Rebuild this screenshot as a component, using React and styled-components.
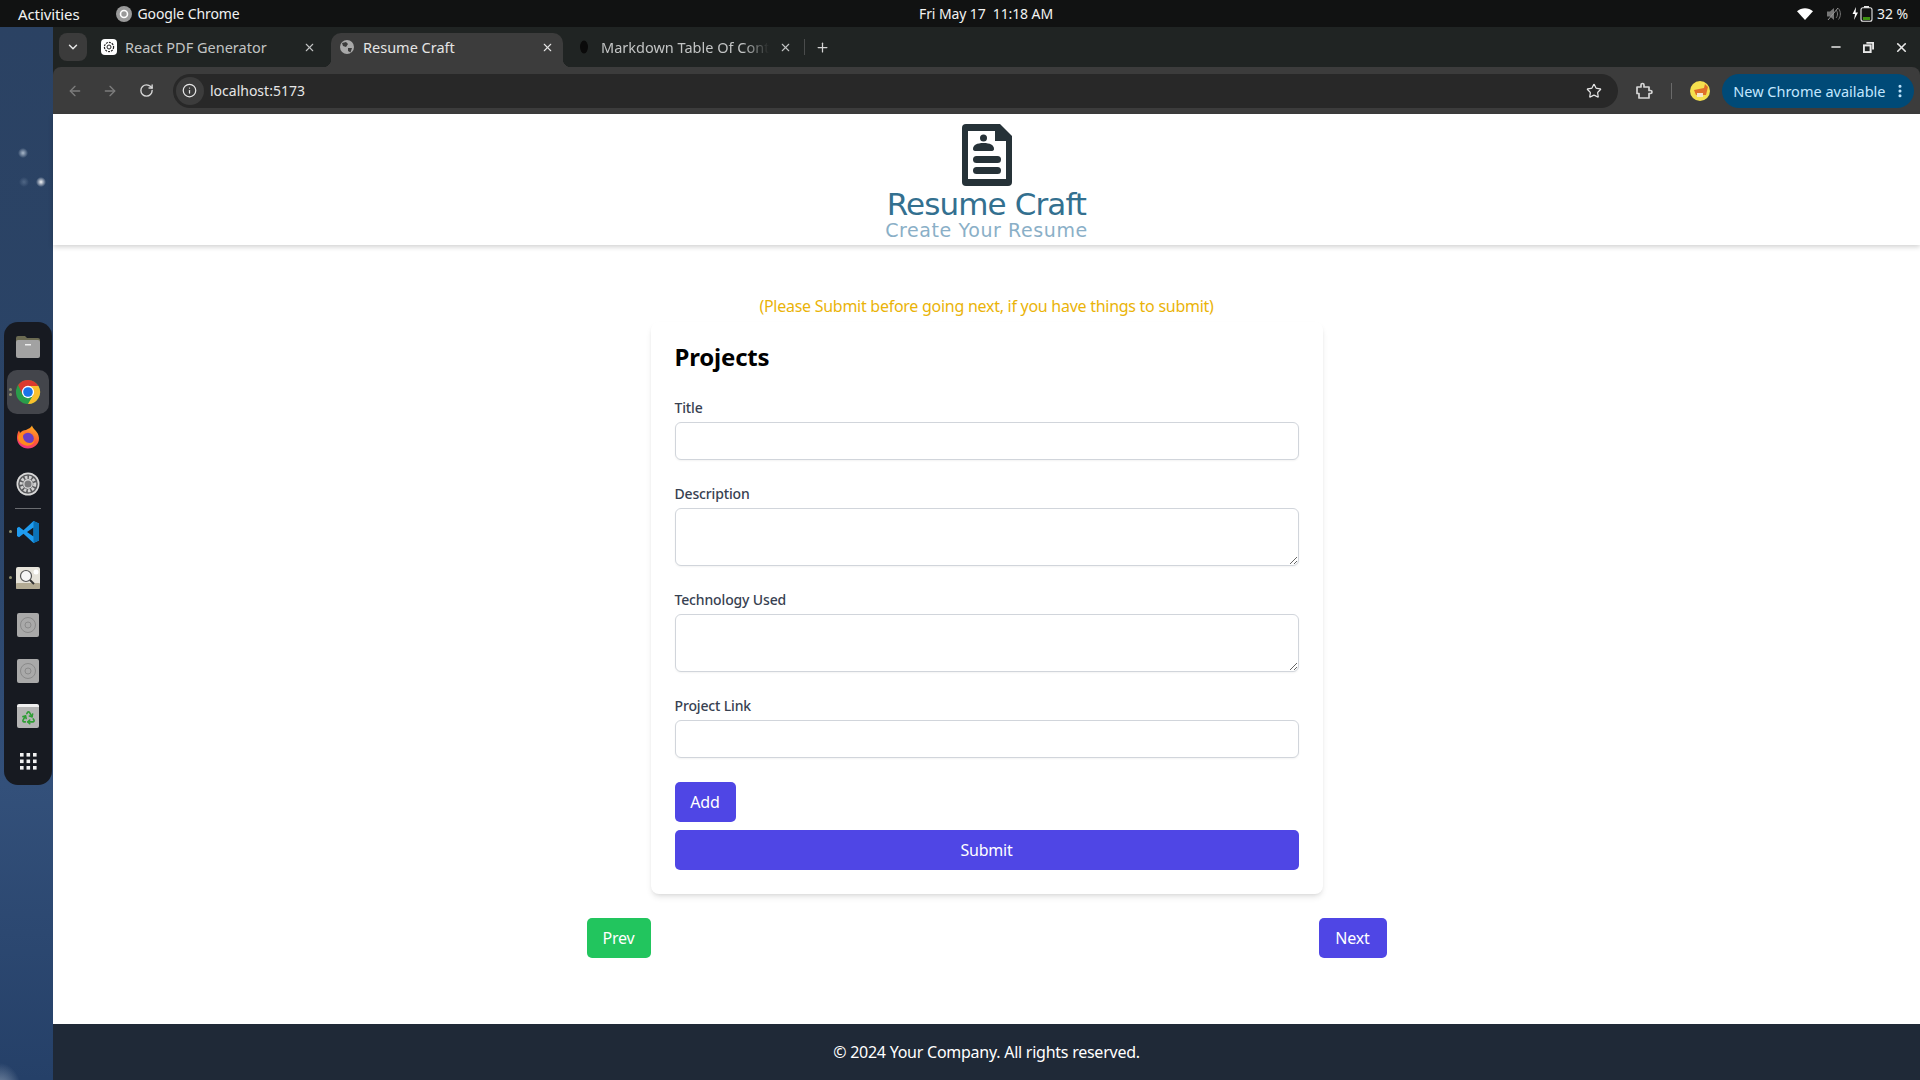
import React from "react";
import styled, { createGlobalStyle } from "styled-components";
import { ArrowLeft, ArrowRight, RotateCw, ChevronDown, X, Plus, Star, EllipsisVertical, Info, Minus, Recycle } from "lucide-react";

const uiFont = `"Noto Sans", "Open Sans", sans-serif`;

const GlobalStyle = createGlobalStyle`
    html, body {
        margin: 0;
        padding: 0;
        height: 100%;
        overflow: hidden;
        font-family: ${uiFont};
    }
    * {
        box-sizing: border-box;
    }
`;

const Screen = styled.div`
    width: 100vw;
    height: 100vh;
    display: flex;
    flex-direction: column;
    overflow: hidden;
`;

const TopBar = styled.div`
    height: 27px;
    flex: none;
    background-color: #111212;
    color: #f2f2f2;
    font-size: 15px;
    display: flex;
    align-items: center;
    letter-spacing: -0.1px;
`;
const TopLeft = styled.div`
    width: 919px;
    display: flex;
    align-items: center;
    padding-left: 18px;
`;
const AppName = styled.div`
    display: flex;
    align-items: center;
    gap: 6px;
    margin-left: 36px;
    font-size: 14px;
`;
const Clock = styled.div`
    font-size: 14px;
    white-space: pre;
`;
const TopRight = styled.div`
    margin-left: auto;
    display: flex;
    align-items: center;
    padding-right: 12px;
    gap: 13px;
    font-size: 14px;
`;
const BatteryWrap = styled.div`
    display: flex;
    align-items: center;
    gap: 3px;
    margin-left: -3px;
`;

const Desktop = styled.div`
    flex: 1;
    display: flex;
    min-height: 0;
`;
const Wallpaper = styled.div`
    width: 53px;
    flex: none;
    padding: 295px 1px 0 4px;
    background:
        radial-gradient(circle 5px at 23px 126px, rgba(201, 214, 228, 0.8), transparent),
        radial-gradient(circle 5px at 41px 155px, rgba(255, 255, 255, 0.95), transparent),
        radial-gradient(circle 5px at 24px 155px, rgba(150, 170, 195, 0.35), transparent),
        radial-gradient(ellipse 22px 30px at 0px 1066px, #8c9db3, transparent),
        linear-gradient(#2b4263 0%, #2a4468 45%, #33507a 72%, #254068 100%);
`;
const Dock = styled.div`
    width: 48px;
    height: 463px;
    background-color: #171a21;
    border-radius: 14px;
    padding-top: 2px;
    display: flex;
    flex-direction: column;
    align-items: center;
`;
const DockItem = styled.div`
    position: relative;
    width: 42px;
    height: ${(p) => p.$h || 46}px;
    display: flex;
    align-items: center;
    justify-content: center;
    border-radius: 10px;
    background-color: ${(p) => (p.$active ? "#43454b" : "transparent")};
`;
const RunDot = styled.span`
    position: absolute;
    left: 2px;
    top: ${(p) => p.$top || 21}px;
    width: 3px;
    height: 3px;
    border-radius: 50%;
    background-color: #8f8f6f;
`;
const DockSeparator = styled.div`
    width: 26px;
    height: 1px;
    background-color: #6a6c70;
`;
const TrashTile = styled.div`
    position: relative;
    width: 22px;
    height: 24px;
    border-radius: 2px;
    background-color: #b5b5b5;
    border-top: 3px solid #f0f0f0;
    display: flex;
    align-items: center;
    justify-content: center;
    color: #2f9e35;
`;

const Browser = styled.div`
    flex: 1;
    min-width: 0;
    display: flex;
    flex-direction: column;
    background-color: #202423;
`;
const TabStrip = styled.div`
    height: 40px;
    flex: none;
    display: flex;
    align-items: flex-end;
    padding-left: 6px;
    color: #c7c7c7;
`;
const TabSearch = styled.div`
    width: 28px;
    height: 28px;
    margin-bottom: 6px;
    margin-right: 6px;
    background-color: #3b3b3b;
    border-radius: 8px;
    display: flex;
    align-items: center;
    justify-content: center;
    color: #e8e8e8;
`;
const Tab = styled.div`
    position: relative;
    width: ${(p) => p.$width}px;
    height: 34px;
    padding: 0 ${(p) => p.$right}px 6px ${(p) => p.$pad}px;
    display: flex;
    align-items: center;
    border-radius: 10px 10px 0 0;
    background-color: ${(p) => (p.$active ? "#3c3c3c" : "transparent")};
    color: ${(p) => (p.$active ? "#e4e4e4" : "#c2c4c4")};
    ${(p) =>
        p.$active &&
        `
        &::before, &::after {
            content: "";
            position: absolute;
            bottom: 0;
            width: 8px;
            height: 8px;
        }
        &::before {
            left: -8px;
            background: radial-gradient(circle at 0 0, transparent 8px, #3c3c3c 8.5px);
        }
        &::after {
            right: -8px;
            background: radial-gradient(circle at 100% 0, transparent 8px, #3c3c3c 8.5px);
        }
    `}
`;
const TabTitle = styled.span`
    flex: 1;
    margin-left: ${(p) => p.$gap}px;
    white-space: nowrap;
    overflow: hidden;
    font-size: 14.5px;
    ${(p) =>
        p.$fade &&
        `
        margin-right: 10px;
        -webkit-mask-image: linear-gradient(90deg, #000 85%, transparent 100%);
        mask-image: linear-gradient(90deg, #000 85%, transparent 100%);
    `}
`;
const OpenAiIcon = styled.span`
    width: 16px;
    height: 16px;
    border-radius: 4px;
    background-color: #fff;
    display: flex;
    align-items: center;
    justify-content: center;
    flex: none;
`;
const TabDivider = styled.div`
    width: 1px;
    height: 16px;
    margin: 0 10px 12px 7px;
    background-color: #4a4c4c;
`;
const NewTab = styled.div`
    height: 34px;
    padding-bottom: 6px;
    display: flex;
    align-items: center;
    color: #d5d5d5;
`;
const WindowControls = styled.div`
    margin-left: auto;
    height: 34px;
    padding: 0 11px 6px 0;
    display: flex;
    align-items: center;
    gap: 20px;
    color: #e8e8e8;
`;

const Toolbar = styled.div`
    height: 47px;
    flex: none;
    background-color: #3c3c3c;
    border-radius: 8px 8px 0 0;
    display: flex;
    align-items: center;
    padding: 0 6px 0 14px;
    color: #e0e0e0;
`;
const NavIcon = styled.div`
    width: 16px;
    display: flex;
    justify-content: center;
    margin-right: ${(p) => p.$gap}px;
    color: ${(p) => (p.$dim ? "#7c7c7c" : "#d8d8d8")};
`;
const Omnibox = styled.div`
    width: 1447px;
    height: 34px;
    border-radius: 17px;
    background-color: #282828;
    display: flex;
    align-items: center;
    padding: 0 16px 0 3px;
    margin-left: 18px;
    font-size: 14px;
    color: #e6e6e6;
`;
const SiteInfo = styled.div`
    width: 28px;
    height: 28px;
    border-radius: 50%;
    background-color: #3c3c3c;
    display: flex;
    align-items: center;
    justify-content: center;
    margin-right: 6px;
`;
const UrlText = styled.span`
    flex: 1;
`;
const ToolSeparator = styled.div`
    width: 1px;
    height: 16px;
    background-color: #6a6a6a;
    margin: 0 18px;
`;
const ExtensionSlot = styled.div`
    margin-left: 17px;
    display: flex;
    color: #d6d6d6;
`;
const Avatar = styled.div`
    width: 20px;
    height: 20px;
    border-radius: 50%;
    background-color: #f5e04e;
    display: flex;
    align-items: center;
    justify-content: center;
    overflow: hidden;
`;
const UpdatePill = styled.div`
    width: 192px;
    height: 34px;
    margin-left: 12px;
    border-radius: 17px;
    background-color: #004a77;
    color: #c2e7ff;
    font-size: 14.5px;
    display: flex;
    align-items: center;
    padding-left: 11px;
    white-space: nowrap;
`;
const PillMenu = styled.span`
    margin-left: auto;
    margin-right: 6px;
    display: flex;
`;

const Page = styled.div`
    flex: 1;
    min-height: 0;
    background-color: #fff;
    display: flex;
    flex-direction: column;
`;
const Header = styled.header`
    height: 131px;
    flex: none;
    padding-top: 10px;
    display: flex;
    flex-direction: column;
    align-items: center;
    box-shadow: 0 2px 5px rgba(0, 0, 0, 0.18);
`;
const LogoIcon = styled.svg`
    display: block;
    flex: none;
`;
const BrandName = styled.div`
    font-family: "DejaVu Sans", sans-serif;
    font-size: 31px;
    line-height: 33px;
    color: #33708f;
    letter-spacing: -0.9px;
    margin-top: 2px;
`;
const BrandTag = styled.div`
    font-family: "DejaVu Sans", sans-serif;
    font-size: 19px;
    line-height: 18px;
    color: #8aafc7;
    letter-spacing: 0.6px;
`;

const Main = styled.main`
    flex: 1;
    min-height: 0;
    display: flex;
    flex-direction: column;
    align-items: center;
    padding-top: 49px;
`;
const Notice = styled.div`
    font-size: 16px;
    line-height: 24px;
    height: 28px;
    color: #eab308;
    letter-spacing: -0.27px;
`;
const Card = styled.form`
    width: 672px;
    padding: 24px;
    background-color: #fff;
    border-radius: 8px;
    box-shadow: 0 4px 6px -1px rgba(0, 0, 0, 0.1), 0 2px 4px -2px rgba(0, 0, 0, 0.1);
`;
const CardTitle = styled.h2`
    margin: 0 0 30px;
    font-size: 24px;
    line-height: 22px;
    font-weight: 700;
    color: #000;
    letter-spacing: -0.2px;
`;
const Field = styled.div`
    margin-bottom: 24px;
`;
const Label = styled.label`
    display: block;
    font-size: 14px;
    line-height: 20px;
    font-weight: 500;
    margin-bottom: 4px;
    color: #374151;
    letter-spacing: -0.15px;
`;
const TextInput = styled.input`
    display: block;
    width: 100%;
    height: 38px;
    border: 1px solid #d1d5db;
    border-radius: 6px;
    background-color: #fff;
    box-shadow: 0 1px 2px rgba(0, 0, 0, 0.05);
`;
const TextArea = styled.textarea`
    display: block;
    width: 100%;
    height: 58px;
    border: 1px solid #d1d5db;
    border-radius: 6px;
    background-color: #fff;
    box-shadow: 0 1px 2px rgba(0, 0, 0, 0.05);
`;
const Button = styled.button`
    display: block;
    height: 40px;
    width: ${(p) => p.$width || "auto"};
    border: none;
    border-radius: 5px;
    background-color: ${(p) => p.$color || "#4f46e5"};
    color: #fff;
    font-family: ${uiFont};
    font-size: 16px;
    padding: 0;
    letter-spacing: -0.2px;
`;
const AddButton = styled(Button)`
    margin-bottom: 8px;
`;
const NavRow = styled.div`
    width: 800px;
    margin-top: 24px;
    display: flex;
    justify-content: space-between;
`;
const Footer = styled.footer`
    height: 56px;
    flex: none;
    background-color: #1f2937;
    color: #fff;
    font-size: 16px;
    letter-spacing: -0.25px;
    display: flex;
    align-items: center;
    justify-content: center;
`;

const ChromeIcon = () => (
    <svg width="26" height="26" viewBox="0 0 28 28">
        <circle cx="14" cy="14" r="13" fill="#2a9d4a" />
        <path d="M14 14 L8.4 17.2 L3.4 6.4 A13 13 0 0 1 25.26 7.5 H14 Z" fill="#dc3a2e" />
        <path d="M14 7.5 H25.26 A13 13 0 0 1 14 27 L19.6 17.2 Z" fill="#fbc02d" />
        <circle cx="14" cy="14" r="6.6" fill="#fff" />
        <circle cx="14" cy="14" r="5.2" fill="#1a73e8" />
    </svg>
);

const FilesIcon = () => (
    <svg width="26" height="24" viewBox="0 0 26 24">
        <path d="M1 3 a2 2 0 0 1 2-2 h7 l2 2 h11 a2 2 0 0 1 2 2 v3 H1 Z" fill="#6b6a52" />
        <rect x="1" y="5" width="24" height="18" rx="2" fill="#a2a2a2" />
        <rect x="10" y="9" width="6" height="1.5" fill="#eee" />
    </svg>
);

const FirefoxIcon = () => (
    <svg width="24" height="24" viewBox="0 0 24 24">
        <defs>
            <linearGradient id="foxBody" x1="0.7" y1="0" x2="0.3" y2="1">
                <stop offset="0" stopColor="#ffb020" />
                <stop offset="0.55" stopColor="#ff5a36" />
                <stop offset="1" stopColor="#f0308a" />
            </linearGradient>
        </defs>
        <path d="M16 0.5 C16.5 4 22.5 6 23 13 C23.4 19 18 23.5 12 23.5 C6 23.5 1 19 1 13 C1 10 1.6 7.5 3 5.5 L4 8 C5.5 6 8 5 10 5 C12.5 3.5 15 3 16 0.5 Z" fill="url(#foxBody)" />
        <circle cx="12" cy="13.5" r="5.8" fill="#6a3fc4" />
        <path d="M2 12 C3 8 6 6 10 7 C8 8 7 9.5 7 11 C7 15 10 18 13.5 18 C16 18 18 16.5 18.5 14 C19 19 14 21.5 10 20.5 C5 19.5 2 16 2 12 Z" fill="#ff8a1e" />
    </svg>
);

const SettingsIcon = () => (
    <svg width="24" height="24" viewBox="0 0 24 24">
        <circle cx="12" cy="12" r="11.5" fill="#d8d8d8" />
        <circle cx="12" cy="12" r="9.8" fill="#58595c" />
        <circle cx="12" cy="12" r="6.8" fill="none" stroke="#d2d2d2" strokeWidth="3" strokeDasharray="2.6 1.5" />
        <circle cx="12" cy="12" r="4.2" fill="#7a7a7c" stroke="#d2d2d2" strokeWidth="1.4" />
    </svg>
);

const VsCodeIcon = () => (
    <svg width="24" height="24" viewBox="0 0 24 24">
        <path d="M17.5 1 L23 3.6 V20.4 L17.5 23 L7.5 13.8 L3 17.2 L1 16 V8 L3 6.8 L7.5 10.2 Z M17.5 7.5 L11 12 L17.5 16.5 Z" fill="#1f9cf0" fillRule="evenodd" />
        <path d="M17.5 1 L23 3.6 V20.4 L17.5 23 Z" fill="#0a72b8" />
    </svg>
);

const SearchAppIcon = () => (
    <svg width="24" height="22" viewBox="0 0 24 22">
        <rect width="24" height="22" rx="2" fill="#e6e3da" />
        <rect y="16" width="24" height="6" rx="1" fill="#b3ab94" />
        <circle cx="10" cy="9" r="5.5" fill="#f6f6f6" stroke="#555" strokeWidth="1.2" />
        <path d="M14 13 L18 17" stroke="#333" strokeWidth="2" />
        <circle cx="20" cy="5" r="2.5" fill="#fff" />
    </svg>
);

const DiscIcon = () => (
    <svg width="22" height="24" viewBox="0 0 22 24">
        <rect width="22" height="24" rx="2" fill="#a9a9a9" />
        <circle cx="11" cy="12" r="7.5" fill="none" stroke="#8a8a8a" strokeWidth="1" />
        <circle cx="11" cy="12" r="3" fill="none" stroke="#8a8a8a" strokeWidth="1" />
    </svg>
);

const GridIcon = () => (
    <svg width="17" height="17" viewBox="0 0 17 17" fill="#f2f2f2">
        {[0, 6.5, 13].map((y) =>
            [0, 6.5, 13].map((x) => <rect key={`${x}-${y}`} x={x} y={y} width="3.6" height="3.6" />)
        )}
    </svg>
);

const WifiIcon = () => (
    <svg width="16" height="12" viewBox="0 0 16 12">
        <path d="M0 3.2 C4.5 -0.8 11.5 -0.8 16 3.2 L8 12 Z" fill="#fff" />
    </svg>
);

const MuteIcon = () => (
    <svg width="16" height="14" viewBox="0 0 16 14">
        <path d="M1 4.5 H4 L8 1 V13 L4 9.5 H1 Z" fill="#777" />
        <path d="M10 3 C12 5 12 9 10 11 M12.5 1.5 C15 4.5 15 9.5 12.5 12.5" fill="none" stroke="#777" strokeWidth="1" />
        <path d="M2 13 L12 1" stroke="#999" strokeWidth="1" />
    </svg>
);

const BatteryIcon = () => (
    <svg width="22" height="16" viewBox="0 0 22 16">
        <path d="M4 1 L0.5 8 H3 L2 14 L6 6.5 H3.6 Z" fill="#fff" />
        <rect x="9" y="1.8" width="11" height="13.4" rx="2" fill="none" stroke="#e8e8e8" strokeWidth="1.1" />
        <rect x="12" y="0" width="5" height="1.8" fill="#e8e8e8" />
        <rect x="11" y="11" width="7" height="3" fill="#3d8f10" />
    </svg>
);

const ExtensionIcon = () => (
    <svg width="18" height="18" viewBox="0 0 18 18" fill="none" stroke="currentColor" strokeWidth="1.7" strokeLinejoin="round">
        <path d="M2 5 H6 V3 a1.5 1.5 0 0 1 3 0 V5 H14 V8.5 H15.5 a1.5 1.5 0 0 1 0 3 H14 V16 H4 V11.5 H2 Z" />
    </svg>
);

const GlobeFavicon = () => (
    <svg width="14" height="14" viewBox="0 0 14 14">
        <circle cx="7" cy="7" r="7" fill="#a9a9a9" />
        <path d="M2 3 L6 2 L8 4 L6 7 L3 6 Z M8 8 L12 8 L10.5 12.5 L8 11 Z" fill="#3c3c3c" />
    </svg>
);

const DocumentLogo = () => (
    <LogoIcon width="50" height="62" viewBox="0 0 50 62">
        <path d="M4 0 H38 L50 12 V58 a4 4 0 0 1 -4 4 H4 a4 4 0 0 1 -4 -4 V4 a4 4 0 0 1 4 -4 Z" fill="#263238" />
        <path d="M6 7 H33 V17 H44 V55 H6 Z" fill="#fff" />
        <circle cx="21.5" cy="14" r="3.5" fill="#263238" />
        <path d="M11 25 C11 21 15 19 21.5 19 C28 19 32 21 32 25 C32 26.5 31 27 29 27 H14 C12 27 11 26.5 11 25 Z" fill="#263238" />
        <rect x="11" y="32" width="28" height="7" rx="3.5" fill="#263238" />
        <rect x="11" y="43" width="28" height="7" rx="3.5" fill="#263238" />
    </LogoIcon>
);

const App = () => {
    return (
        <Screen>
            <GlobalStyle />
            <TopBar>
                <TopLeft>
                    Activities
                    <AppName>
                        <svg width="16" height="16" viewBox="0 0 16 16">
                            <circle cx="8" cy="8" r="8" fill="#9a9a9a" />
                            <circle cx="8" cy="8" r="3.5" fill="none" stroke="#fff" strokeWidth="1.6" />
                        </svg>
                        Google Chrome
                    </AppName>
                </TopLeft>
                <Clock>{"Fri May 17  11:18 AM"}</Clock>
                <TopRight>
                    <WifiIcon />
                    <MuteIcon />
                    <BatteryWrap>
                        <BatteryIcon />
                        32 %
                    </BatteryWrap>
                </TopRight>
            </TopBar>
            <Desktop>
                <Wallpaper>
                    <Dock>
                        <DockItem><FilesIcon /></DockItem>
                        <DockItem $active $h={44}>
                            <RunDot $top={18} />
                            <RunDot $top={23} />
                            <ChromeIcon />
                        </DockItem>
                        <DockItem><FirefoxIcon /></DockItem>
                        <DockItem $h={48}><SettingsIcon /></DockItem>
                        <DockSeparator />
                        <DockItem><RunDot /><VsCodeIcon /></DockItem>
                        <DockItem><RunDot /><SearchAppIcon /></DockItem>
                        <DockItem $h={48}><DiscIcon /></DockItem>
                        <DockItem $h={44}><DiscIcon /></DockItem>
                        <DockItem>
                            <TrashTile><Recycle size={15} strokeWidth={2.6} /></TrashTile>
                        </DockItem>
                        <DockItem $h={44}><GridIcon /></DockItem>
                    </Dock>
                </Wallpaper>
                <Browser>
                    <TabStrip>
                        <TabSearch><ChevronDown size={14} strokeWidth={2.5} /></TabSearch>
                        <Tab $width={238} $pad={8} $right={15}>
                            <OpenAiIcon>
                                <svg width="12" height="12" viewBox="0 0 12 12">
                                    <circle cx="6" cy="6" r="4.6" fill="none" stroke="#222" strokeWidth="1.2" strokeDasharray="2 1" />
                                    <circle cx="6" cy="6" r="2" fill="none" stroke="#222" strokeWidth="1" />
                                </svg>
                            </OpenAiIcon>
                            <TabTitle $gap={8}>React PDF Generator</TabTitle>
                            <X size={13} strokeWidth={2} />
                        </Tab>
                        <Tab $width={232} $active $pad={9} $right={9}>
                            <GlobeFavicon />
                            <TabTitle $gap={9}>Resume Craft</TabTitle>
                            <X size={13} strokeWidth={2} />
                        </Tab>
                        <Tab $width={234} $pad={16} $right={5}>
                            <svg width="10" height="16" viewBox="0 0 10 16">
                                <ellipse cx="5" cy="8" rx="4" ry="6.5" fill="#0a0a0a" />
                            </svg>
                            <TabTitle $gap={12} $fade>Markdown Table Of Contents</TabTitle>
                            <X size={13} strokeWidth={2} />
                        </Tab>
                        <TabDivider />
                        <NewTab><Plus size={15} strokeWidth={2} /></NewTab>
                        <WindowControls>
                            <Minus size={14} strokeWidth={2.4} />
                            <svg width="11" height="11" viewBox="0 0 13 13" fill="none" stroke="currentColor" strokeWidth="2.4">
                                <rect x="1" y="4" width="8" height="8" />
                                <path d="M4 1 H12 V9" />
                            </svg>
                            <X size={15} strokeWidth={2.6} />
                        </WindowControls>
                    </TabStrip>
                    <Toolbar>
                        <NavIcon $dim $gap={19}><ArrowLeft size={16} /></NavIcon>
                        <NavIcon $dim $gap={21}><ArrowRight size={16} /></NavIcon>
                        <NavIcon><RotateCw size={15} strokeWidth={2.2} /></NavIcon>
                        <Omnibox>
                            <SiteInfo><Info size={15} strokeWidth={2} /></SiteInfo>
                            <UrlText>localhost:5173</UrlText>
                            <Star size={16} strokeWidth={1.8} />
                        </Omnibox>
                        <ExtensionSlot><ExtensionIcon /></ExtensionSlot>
                        <ToolSeparator />
                        <Avatar>
                            <svg width="20" height="20" viewBox="0 0 20 20">
                                <path d="M4 9 L14 7 L15 3 L18 6 L16 14 H6 Z" fill="#e0702a" />
                                <rect x="7" y="12" width="6" height="4" fill="#f6e6c8" />
                            </svg>
                        </Avatar>
                        <UpdatePill>
                            New Chrome available
                            <PillMenu><EllipsisVertical size={16} strokeWidth={2.6} /></PillMenu>
                        </UpdatePill>
                    </Toolbar>
                    <Page>
                        <Header>
                            <DocumentLogo />
                            <BrandName>Resume Craft</BrandName>
                            <BrandTag>Create Your Resume</BrandTag>
                        </Header>
                        <Main>
                            <Notice>(Please Submit before going next, if you have things to submit)</Notice>
                            <Card>
                                <CardTitle>Projects</CardTitle>
                                <Field>
                                    <Label>Title</Label>
                                    <TextInput />
                                </Field>
                                <Field>
                                    <Label>Description</Label>
                                    <TextArea />
                                </Field>
                                <Field>
                                    <Label>Technology Used</Label>
                                    <TextArea />
                                </Field>
                                <Field>
                                    <Label>Project Link</Label>
                                    <TextInput />
                                </Field>
                                <AddButton type="button" $width="61px">Add</AddButton>
                                <Button type="button" $width="100%">Submit</Button>
                            </Card>
                            <NavRow>
                                <Button type="button" $width="64px" $color="#22c55e">Prev</Button>
                                <Button type="button" $width="68px">Next</Button>
                            </NavRow>
                        </Main>
                        <Footer>© 2024 Your Company. All rights reserved.</Footer>
                    </Page>
                </Browser>
            </Desktop>
        </Screen>
    );
};

export default App;
